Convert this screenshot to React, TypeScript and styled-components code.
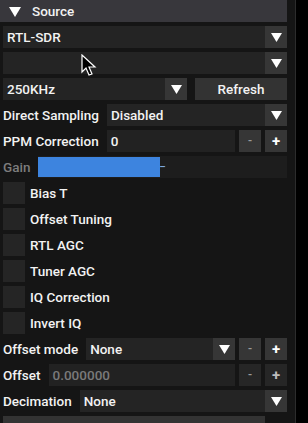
import React from 'react';
import styled, { createGlobalStyle } from 'styled-components';

const GlobalStyle = createGlobalStyle`
  html, body {
    margin: 0;
    padding: 0;
    background: #000;
  }
  body {
    font-family: 'Roboto', 'Liberation Sans', sans-serif;
    font-size: 13.5px;
    font-weight: 500;
    color: #f2f2f2;
  }
`;

const checkboxes = ['Bias T', 'Offset Tuning', 'RTL AGC', 'Tuner AGC', 'IQ Correction', 'Invert IQ'];

function Arrow() {
  return (
    <svg width='11' height='9' viewBox='0 0 11 9'>
      <polygon points='0,0 11,0 5.5,9' fill='#fff' />
    </svg>
  );
}

function Combo({ value, width }: { value: string; width?: number }) {
  return (
    <ComboBox style={width ? { flex: `0 0 ${width}px` } : undefined}>
      <ComboText>{value}</ComboText>
      <ArrowButton>
        <Arrow />
      </ArrowButton>
    </ComboBox>
  );
}

function Stepper({ dim }: { dim?: boolean }) {
  return (
    <>
      <SmallButton dim={dim}>
        <Minus>-</Minus>
      </SmallButton>
      <SmallButton dim={dim}>
        <Plus dim={dim}>+</Plus>
      </SmallButton>
    </>
  );
}

function App() {
  return (
    <Screen>
      <GlobalStyle />
      <Panel>
        <Content>
          <Header>
            <svg width='12' height='10' viewBox='0 0 12 10'>
              <polygon points='0,0 12,0 6,10' fill='#fff' />
            </svg>
            <span>Source</span>
          </Header>
          <Rows>
            <Row>
              <Combo value='RTL-SDR' />
            </Row>
            <Row>
              <Combo value='' />
            </Row>
            <Row>
              <Combo value='250KHz' width={184} />
              <WideButton>Refresh</WideButton>
            </Row>
            <Row>
              <Label>Direct Sampling</Label>
              <Combo value='Disabled' />
            </Row>
            <Row>
              <Label>PPM Correction</Label>
              <Field>0</Field>
              <Stepper />
            </Row>
            <Row>
              <Label muted>Gain</Label>
              <SliderTrack>
                <SliderFill style={{ width: '49%' }} />
                <SliderGrab>–</SliderGrab>
              </SliderTrack>
            </Row>
            {checkboxes.map((name) => (
              <Row key={name}>
                <CheckBox />
                <CheckLabel>{name}</CheckLabel>
              </Row>
            ))}
            <Row>
              <Label>Offset mode</Label>
              <Combo value='None' />
              <Stepper />
            </Row>
            <Row>
              <Label>Offset</Label>
              <Field muted>0.000000</Field>
              <Stepper dim />
            </Row>
            <Row>
              <Label>Decimation</Label>
              <Combo value='None' />
            </Row>
            <Row>
              <NextBar />
            </Row>
          </Rows>
        </Content>
      </Panel>
      <Edge />
      <Cursor width='16' height='24' viewBox='0 0 16 24'>
        <path d='M1 1 L1 18 L5 14 L8 21 L11 20 L8 13 L14 13 Z' fill='#000' stroke='#fff' strokeWidth='1.2' />
      </Cursor>
    </Screen>
  );
}

export default App;

const Screen = styled.div`
  position: relative;
  width: 308px;
  height: 423px;
  overflow: hidden;
  display: flex;
  background: #000;
`;

const Panel = styled.div`
  width: 295px;
  height: 100%;
  background: #151515;
  flex: 0 0 295px;
`;

const Content = styled.div`
  width: 287px;
  display: flex;
  flex-direction: column;
  gap: 4px;
`;

const Edge = styled.div`
  width: 1px;
  height: 100%;
  background: #2c2c2c;
`;

const Header = styled.div`
  height: 22px;
  background: #38373c;
  display: flex;
  align-items: center;
  gap: 11px;
  padding-left: 9px;
  font-weight: 500;

  svg {
    margin-top: 1px;
  }
`;

const Rows = styled.div`
  display: flex;
  flex-direction: column;
  gap: 4px;
  padding-left: 3px;
`;

const Row = styled.div`
  height: 22px;
  display: flex;
  align-items: center;
  gap: 4px;
`;

const Label = styled.span<{ muted?: boolean }>`
  color: ${(p) => (p.muted ? '#7d7d7d' : '#f2f2f2')};
  white-space: nowrap;
  padding-right: 4px;
`;

const ComboBox = styled.div`
  flex: 1;
  height: 22px;
  display: flex;
  background: #242424;
  min-width: 0;
`;

const ComboText = styled.span`
  flex: 1;
  padding-left: 4px;
  line-height: 22px;
  white-space: nowrap;
  overflow: hidden;
`;

const ArrowButton = styled.div`
  width: 22px;
  height: 22px;
  background: #363636;
  display: flex;
  align-items: center;
  justify-content: center;
`;

const WideButton = styled.div`
  flex: 1;
  height: 22px;
  margin-left: 4px;
  background: #333333;
  display: flex;
  align-items: center;
  justify-content: center;
`;

const Field = styled.div<{ muted?: boolean }>`
  flex: 1;
  height: 22px;
  background: #222222;
  line-height: 22px;
  padding-left: 4px;
  color: ${(p) => (p.muted ? '#7a7a7a' : '#f2f2f2')};
`;

const SmallButton = styled.div<{ dim?: boolean }>`
  width: 22px;
  height: 22px;
  flex: 0 0 22px;
  background: ${(p) => (p.dim ? '#262626' : '#363636')};
  display: flex;
  align-items: center;
  justify-content: center;
`;

const Minus = styled.span`
  color: #9a9a9a;
  font-size: 12px;
`;

const Plus = styled.span<{ dim?: boolean }>`
  color: ${(p) => (p.dim ? '#bdbdbd' : '#ffffff')};
  font-size: 15px;
  font-weight: 700;
`;

const SliderTrack = styled.div`
  flex: 1;
  height: 22px;
  background: #1d1d1d;
  display: flex;
  align-items: center;
`;

const SliderFill = styled.div`
  height: 20px;
  background: #3d84df;
`;

const SliderGrab = styled.span`
  color: #7fa8dc;
  font-size: 10px;
  margin-left: -1px;
`;

const CheckBox = styled.div`
  width: 22px;
  height: 22px;
  background: #252525;
`;

const CheckLabel = styled.span`
  margin-left: 1px;
`;

const NextBar = styled.div`
  width: 262px;
  height: 22px;
  background: #333333;
`;

const Cursor = styled.svg`
  position: absolute;
  left: 81px;
  top: 54px;
`;
